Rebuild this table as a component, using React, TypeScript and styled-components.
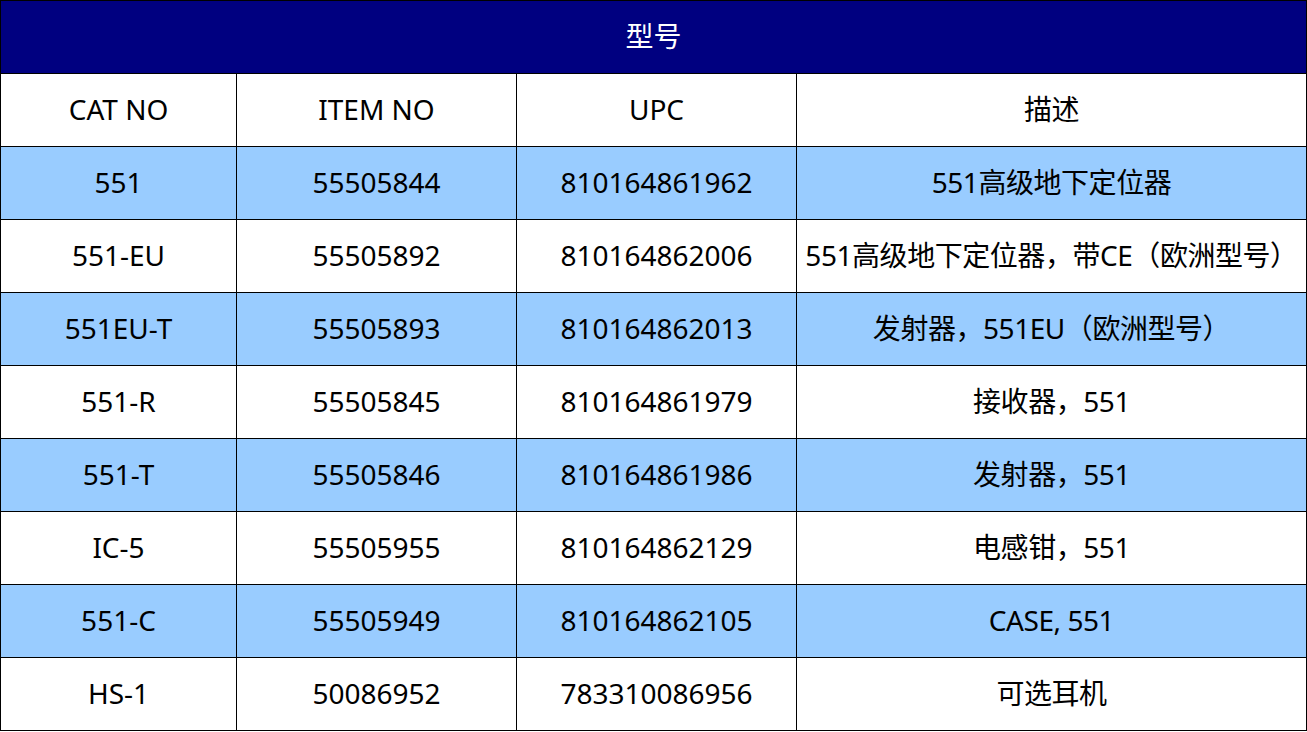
import styled, { createGlobalStyle } from "styled-components";

const rows = [
  ["551", "55505844", "810164861962", "551高级地下定位器"],
  ["551-EU", "55505892", "810164862006", "551高级地下定位器，带CE（欧洲型号）"],
  ["551EU-T", "55505893", "810164862013", "发射器，551EU（欧洲型号）"],
  ["551-R", "55505845", "810164861979", "接收器，551"],
  ["551-T", "55505846", "810164861986", "发射器，551"],
  ["IC-5", "55505955", "810164862129", "电感钳，551"],
  ["551-C", "55505949", "810164862105", "CASE, 551"],
  ["HS-1", "50086952", "783310086956", "可选耳机"],
];

export default function App() {
  return (
    <>
      <GlobalStyle />
      <Table>
        <colgroup>
          <col style={{ width: 236 }} />
          <col style={{ width: 280 }} />
          <col style={{ width: 280 }} />
          <col style={{ width: 510 }} />
        </colgroup>
        <thead>
          <tr>
            <TitleCell colSpan={4}>型号</TitleCell>
          </tr>
          <tr>
            <Cell>CAT NO</Cell>
            <Cell>ITEM NO</Cell>
            <Cell>UPC</Cell>
            <Cell $desc>描述</Cell>
          </tr>
        </thead>
        <tbody>
          {rows.map((r, i) => (
            <Row key={r[0]} $shaded={i % 2 === 0}>
              {r.map((c, j) => (
                <Cell key={j} $desc={j === 3}>
                  {c}
                </Cell>
              ))}
            </Row>
          ))}
        </tbody>
      </Table>
    </>
  );
}

const GlobalStyle = createGlobalStyle`
  body {
    margin: 0;
    background: #ffffff;
    font-family: "Noto Sans", "Noto Sans CJK SC", sans-serif;
  }
`;

const Table = styled.table`
  border-collapse: collapse;
  table-layout: fixed;
  width: 1306px;
  color: #000000;
  font-size: 28px;
`;

const Cell = styled.td<{ $desc?: boolean }>`
  height: 73px;
  box-sizing: border-box;
  padding: 0 0 3px;
  border: 1px solid #000000;
  text-align: center;
  vertical-align: middle;
  white-space: nowrap;
  line-height: 1;
  letter-spacing: ${(p) => (p.$desc ? "-0.45px" : "0")};
`;

const TitleCell = styled(Cell)`
  background: #000080;
  color: #ffffff;
`;

const Row = styled.tr<{ $shaded: boolean }>`
  background: ${(p) => (p.$shaded ? "#99ccff" : "#ffffff")};
`;
